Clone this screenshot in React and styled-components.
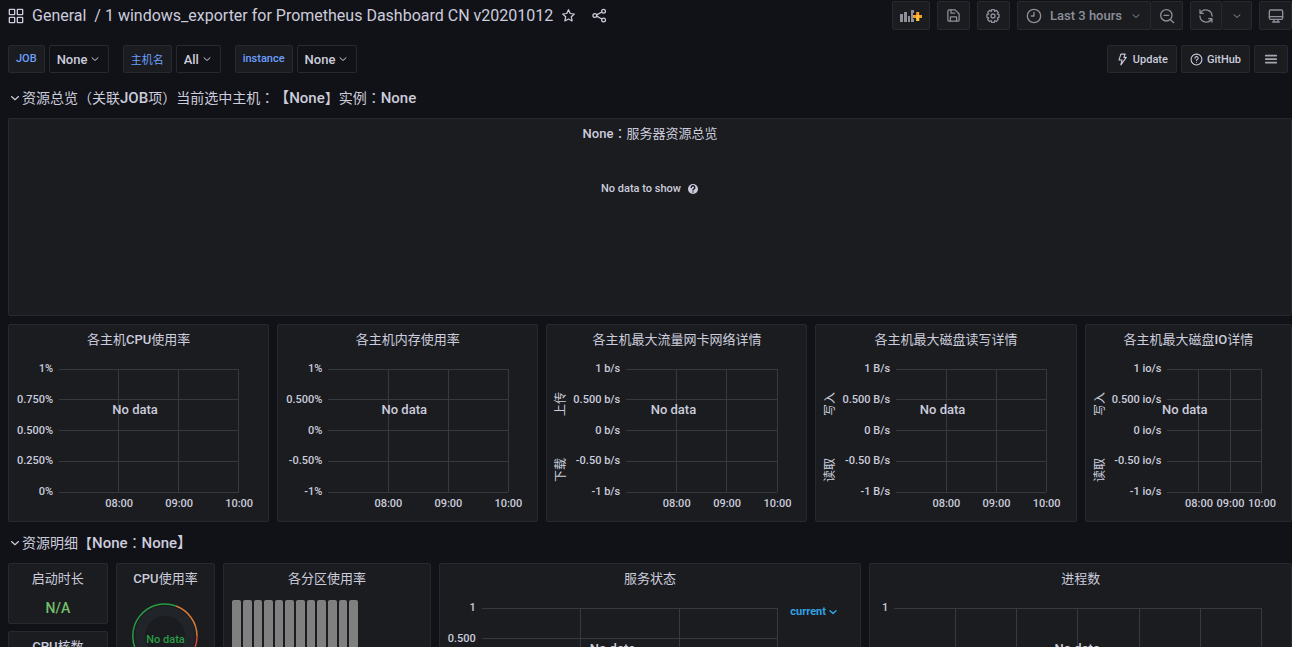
import React from "react";
import styled, { createGlobalStyle, css } from "styled-components";

const c = {
  canvas: "#111217",
  panel: "#1a1c20",
  border: "#27292e",
  text: "#ccccdc",
  muted: "#8e8f99",
  blue: "#6e9fff",
  cyan: "#33a2e5",
  green: "#73bf69",
  grid: "#37393d",
};

const GlobalStyle = createGlobalStyle`
  *, *::before, *::after { box-sizing: border-box; }
  body {
    margin: 0;
    background: ${c.canvas};
    color: ${c.text};
    font-family: Roboto, "Noto Sans CJK SC", sans-serif;
    font-size: 14px;
    text-spacing-trim: space-all;
  }
  button, select { font: inherit; color: inherit; }
  h1, h2, h3 { margin: 0; }
`;

const Page = styled.div`
  height: 100vh;
  overflow: hidden;
`;

const Header = styled.header`
  display: flex;
  align-items: center;
  justify-content: space-between;
  height: 31px;
  padding: 1px 0 1px 8px;
`;

const Breadcrumb = styled.div`
  display: flex;
  align-items: center;
  gap: 8px;
`;

const Title = styled.h1`
  font-size: 16px;
  line-height: 24px;
  font-weight: 400;
  white-space: pre;
`;

const Crumb = styled.a`
  color: inherit;
  text-decoration: none;
`;

const IconButton = styled.button`
  display: flex;
  padding: 0;
  border: 0;
  background: none;
  margin-right: 8px;
`;

const Toolbar = styled.div`
  display: flex;
  gap: 7px;
`;

const ButtonGroup = styled.div`
  display: flex;
`;

const ToolButton = styled.button`
  display: flex;
  align-items: center;
  justify-content: center;
  gap: 8px;
  height: 29px;
  min-width: ${(p) => p.$width || 33}px;
  padding: 0 6px;
  color: ${c.muted};
  background: ${c.panel};
  border: 1px solid ${c.border};
  border-radius: 2px;
  font-size: 13px;
  font-weight: 500;
  white-space: nowrap;
  ${(p) => p.$joined && css`border-left: 0;`}
`;

const TimeButton = styled(ToolButton)`
  justify-content: flex-start;
  min-width: 134px;
  padding: 0 8px;
  svg:last-child { margin-left: auto; }
`;

const Controls = styled.div`
  display: flex;
  justify-content: space-between;
  padding: 14px 4px 12px 8px;
`;

const Variables = styled.div`
  display: flex;
  gap: 14px;
`;

const Variable = styled.div`
  display: flex;
  gap: 4px;
`;

const VariableLabel = styled.label`
  height: 28px;
  padding: 0 7px;
  line-height: 26px;
  font-size: 11px;
  font-weight: 500;
  color: ${c.blue};
  background: ${c.panel};
  border: 1px solid ${c.border};
  border-radius: 2px;
`;

const SelectBox = styled.div`
  position: relative;
  svg {
    position: absolute;
    right: 8px;
    top: 8px;
    pointer-events: none;
  }
`;

const Select = styled.select`
  appearance: none;
  height: 28px;
  padding: 0 20px 0 7px;
  font-size: 13px;
  font-weight: 500;
  background: ${c.canvas};
  border: 1px solid ${c.border};
  border-radius: 2px;
`;

const Links = styled.nav`
  display: flex;
  gap: 4px;
`;

const LinkButton = styled.a`
  display: flex;
  align-items: center;
  justify-content: center;
  gap: 4px;
  height: 28px;
  min-width: 34px;
  padding: 0 8px;
  color: ${(p) => (p.$muted ? "#a5a6b1" : c.text)};
  background: ${c.panel};
  border: 1px solid ${c.border};
  border-radius: 2px;
  font-size: 11px;
  font-weight: 500;
  text-decoration: none;
`;

const RowTitle = styled.button`
  display: flex;
  align-items: center;
  height: 25px;
  margin: 0 0 8px;
  padding: 0 0 0 8px;
  border: 0;
  background: none;
  font-size: 15px;
  line-height: 24px;
  font-weight: 500;
`;

const PanelGrid = styled.section`
  display: grid;
  grid-template-columns: repeat(24, minmax(0, 1fr));
  gap: 8px;
  padding: 0 0 0 8px;
  margin-bottom: 8px;
`;

const Column = styled.div`
  grid-column: span ${(p) => p.$span};
  display: flex;
  flex-direction: column;
  gap: 7px;
`;

const PanelBox = styled.article`
  grid-column: span ${(p) => p.$span || 24};
  display: flex;
  flex-direction: column;
  min-width: 0;
  min-height: ${(p) => p.$height || 198}px;
  background: ${c.panel};
  border: 1px solid ${c.border};
  border-radius: 2px;
`;

const PanelTitle = styled.h2`
  height: 28px;
  line-height: 28px;
  text-align: center;
  font-size: 13px;
  font-weight: 500;
  white-space: nowrap;
`;

const Han = styled.span`
  font-family: "Noto Sans CJK SC", sans-serif;
  font-weight: 400;
  ${RowTitle} & { font-size: 14px; }
`;

const Wide = styled(Han)`
  font-family: "Noto Sans CJK TC", sans-serif;
`;

const EmptyNote = styled.p`
  display: flex;
  align-items: center;
  justify-content: center;
  gap: 6px;
  margin: 33px 0 0;
  font-size: 11px;
  line-height: 18px;
  font-weight: 500;
`;

const GraphBody = styled.div`
  display: flex;
  flex: 1;
  padding: 0 15px 0 8px;
`;

const Graph = styled.div`
  position: relative;
  display: flex;
  flex: 1;
  min-width: 0;
  padding: 16px ${(p) => (p.$legend ? 0 : 14)}px 0 0;
`;

const SideLabels = styled.div`
  display: flex;
  gap: 42px;
  width: 18px;
  height: 90px;
  margin-top: 23px;
  font-size: 12px;
  line-height: 12px;
  writing-mode: vertical-rl;
  text-orientation: sideways;
  transform: rotate(180deg);
  justify-content: flex-start;
  align-items: flex-start;
`;

const YAxis = styled.div`
  display: flex;
  flex-direction: column;
  justify-content: space-between;
  height: ${(p) => p.$height + 14}px;
  margin: -7px 6px 0 0;
  text-align: right;
  font-size: 11px;
  line-height: 14px;
  font-weight: 500;
  white-space: nowrap;
`;

const PlotColumn = styled.div`
  flex: 1;
  min-width: 0;
`;

const Plot = styled.svg`
  display: block;
  width: 100%;
  height: ${(p) => p.$height}px;
  overflow: visible;
  stroke: ${c.grid};
  shape-rendering: crispEdges;
`;

const XAxis = styled.div`
  display: grid;
  grid-template-columns: repeat(${(p) => p.$count}, minmax(0, 1fr));
  margin-top: 5px;
  font-size: 11px;
  line-height: 14px;
  font-weight: 500;
`;

const XTick = styled.span`
  justify-self: end;
  display: flex;
  justify-content: center;
  width: 0;
  white-space: nowrap;
`;

const NoData = styled.div`
  position: absolute;
  inset: 48px 0 auto;
  text-align: center;
  font-size: 13px;
  line-height: 18px;
  font-weight: 500;
`;

const Legend = styled.div`
  width: 68px;
  padding: 12px 0 0 13px;
`;

const LegendSort = styled.button`
  display: flex;
  align-items: center;
  gap: 1px;
  padding: 0;
  border: 0;
  background: none;
  color: ${c.cyan};
  font-size: 11px;
  line-height: 16px;
  font-weight: 700;
`;

const StatValue = styled.div`
  padding-top: 6px;
  text-align: center;
  font-size: 14px;
  line-height: 20px;
  font-weight: 500;
  color: ${c.green};
`;

const GaugeBody = styled.div`
  display: grid;
  justify-items: center;
  padding-top: 11px;
  > * { grid-area: 1 / 1; }
`;

const GaugeText = styled.span`
  align-self: center;
  padding-top: 6px;
  font-size: 11px;
  font-weight: 500;
  color: #299c46;
`;

const Bars = styled.div`
  display: grid;
  grid-template-columns: repeat(18, minmax(0, 1fr));
  gap: 2px;
  flex: 1;
  padding: 8px;
`;

const Bar = styled.div`
  background: #808080;
  border-radius: 2px 2px 0 0;
`;

function Icon({ size = 16, width = 2, children }) {
  return (
    <svg width={size} height={size} viewBox="0 0 24 24" fill="none" stroke="currentColor"
      strokeWidth={width} strokeLinecap="round" strokeLinejoin="round" aria-hidden="true">
      {children}
    </svg>
  );
}

const Chevron = ({ size = 12, width = 2 }) => (
  <Icon size={size} width={width}><path d="M6 9.5l6 5.500 6-5.500" /></Icon>
);
const Apps = () => (
  <Icon>
    <rect x="2" y="2" width="8" height="8" rx="0.5" /><rect x="14" y="2" width="8" height="8" rx="0.5" />
    <rect x="2" y="14" width="8" height="8" rx="0.5" /><rect x="14" y="14" width="8" height="8" rx="0.5" />
  </Icon>
);
const Star = () => (
  <Icon size={15}><path d="M12 2.8l2.8 6 6.5.8-4.8 4.5 1.3 6.6L12 17.5l-5.8 3.2 1.3-6.6-4.8-4.5 6.5-.8z" /></Icon>
);
const Share = () => (
  <Icon size={15}>
    <circle cx="4.500" cy="12" r="3" /><circle cx="18.500" cy="5" r="3" /><circle cx="18.500" cy="19" r="3" />
    <path d="M7.500 11l8.300-4.500M7.500 13l8.300 4.500" />
  </Icon>
);
const AddPanel = () => (
  <svg width="22" height="16" viewBox="0 0 22 16" aria-hidden="true">
    <g fill={c.muted}>
      <path d="M0 6h3v8H0zM4 4h3v10H4zM8 8h2v6H8zM11 2h3v3h-1v6h1v3h-3z" />
    </g>
    <path d="M16.200 4h3v3H22v3h-2.800v3h-3v-3H13V7h3.200z" fill="#f79b2c" />
    <path d="M16.200 7h3v6h-3z" fill="#fbc43b" />
  </svg>
);
const Save = () => (
  <Icon size={15}>
    <path d="M5 3h9.500L21 9.500V19a2 2 0 0 1-2 2H5a2 2 0 0 1-2-2V5a2 2 0 0 1 2-2z" />
    <path d="M8 3v5h6M7 21v-6a1 1 0 0 1 1-1h8a1 1 0 0 1 1 1v6" />
  </Icon>
);
const Cog = () => (
  <Icon>
    <path d="M9.500 5L10 2.500h4l.5 2.500 2.300-1.500 3 3L18.500 9l2.500.5v4.500l-2.500.8 1.300 2.500-3 3-2.300-1.300-.5 2.500h-4l-.5-2.500-2.500 1.300-3-3L5.500 15 3 14.200V9.700L5.500 9 4.200 6.500l3-3z" />
    <circle cx="12" cy="12" r="3" />
  </Icon>
);
const Clock = () => (
  <Icon><circle cx="12" cy="12" r="10" /><path d="M12 6.500V12H8" /></Icon>
);
const ZoomOut = () => (
  <Icon><circle cx="11" cy="11" r="8.500" /><path d="M7.500 11h7M17.500 17.500L22 22" /></Icon>
);
const Sync = () => (
  <Icon>
    <path d="M3 3v5h5M3.500 8a9.300 9.300 0 0 1 17.600 4M21 21v-5h-5M20.500 16A9.300 9.300 0 0 1 2.900 12" />
  </Icon>
);
const Monitor = () => (
  <Icon><rect x="2" y="3" width="20" height="14" rx="2" /><path d="M2 13h20M9 17v4M15 17v4M7 21h10" /></Icon>
);
const Bolt = () => (
  <Icon size={13}><path d="M9 2h8l-2.500 6H19L9 22l2-9H5.500z" /></Icon>
);
const Question = () => (
  <Icon size={13}>
    <circle cx="12" cy="12" r="10" />
    <path d="M9.200 9.500a2.900 2.900 0 1 1 4 2.700c-.8.300-1.200.8-1.200 1.500M12 17v.1" />
  </Icon>
);
const Menu = () => (
  <Icon size={14} width={3}><path d="M3 6h18M3 12h18M3 18h18" /></Icon>
);
const HelpSolid = () => (
  <svg width="12" height="12" viewBox="0 0 24 24" aria-hidden="true">
    <circle cx="12" cy="12" r="10" fill={c.text} />
    <path d="M8.500 9a3.500 3.500 0 1 1 4.800 3.300c-.9.400-1.300.9-1.300 1.900M12 17.800v.2" fill="none"
      stroke={c.panel} strokeWidth="3" strokeLinecap="round" />
  </svg>
);

/* Sets Chinese runs in the regular weight beside medium Latin, with centred full-width marks. */
function Mixed({ children }) {
  return children.split(/([（）：]|[\u3010\u3011\u4e00-\u9fff]+)/).filter(Boolean).map((run, i) => {
    if (/^[（）：]$/.test(run)) return <Wide key={i}>{run}</Wide>;
    if (/^[【】]$/.test(run)) return <React.Fragment key={i}>{run}</React.Fragment>;
    if (/[\u4e00-\u9fff]/.test(run)) return <Han key={i}>{run}</Han>;
    return <React.Fragment key={i}>{run}</React.Fragment>;
  });
}

function Panel({ title, children, ...rest }) {
  return (
    <PanelBox {...rest}>
      <PanelTitle><Mixed>{title}</Mixed></PanelTitle>
      {children}
    </PanelBox>
  );
}

function TimeGraph({ y, x = ["08:00", "09:00", "10:00"], sides, legend, height = 123 }) {
  return (
    <GraphBody>
      <Graph $legend={legend}>
        {sides && <SideLabels>{sides.map((s) => <span key={s}>{s}</span>)}</SideLabels>}
        <YAxis $height={height}>{y.map((v) => <span key={v}>{v}</span>)}</YAxis>
        <PlotColumn>
          <Plot $height={height}>
            {y.map((v, i) => {
              const at = `${(i * 100) / (y.length - 1)}%`;
              return <line key={v} x1="0" x2="100%" y1={at} y2={at} />;
            })}
            {x.map((v, i) => {
              const at = `${((i + 1) * 100) / x.length}%`;
              return <line key={v} x1={at} x2={at} y1="0" y2="100%" />;
            })}
          </Plot>
          <XAxis $count={x.length}>{x.map((v) => <XTick key={v}>{v}</XTick>)}</XAxis>
        </PlotColumn>
        <NoData>No data</NoData>
      </Graph>
      {legend && <Legend><LegendSort>{legend}<Chevron size={12} width={3} /></LegendSort></Legend>}
    </GraphBody>
  );
}

function Gauge() {
  return (
    <GaugeBody>
      <svg width="66" height="66" viewBox="-33 -33 66 66" fill="none" aria-hidden="true">
        <circle r="25" stroke="#212429" strokeWidth="10" />
        <path d="M-26 18.900A32 32 0 0 1 11 -30" stroke="#299c46" strokeWidth="1.500" />
        <path d="M11 -30A32 32 0 0 1 32 0" stroke="#d27a36" strokeWidth="1.500" />
        <path d="M32 0A32 32 0 0 1 26 18.900" stroke="#d44a3a" strokeWidth="1.500" />
      </svg>
      <GaugeText>No data</GaugeText>
    </GaugeBody>
  );
}

function VariablePicker({ id, label, value }) {
  return (
    <Variable>
      <VariableLabel htmlFor={id}><Mixed>{label}</Mixed></VariableLabel>
      <SelectBox>
        <Select id={id} defaultValue={value}><option>{value}</option></Select>
        <Chevron />
      </SelectBox>
    </Variable>
  );
}

const signed = (unit) => ["1", "0.500", "0", "-0.50", "-1"].map((v) => v + unit);

export default function App() {
  return (
    <Page>
      <GlobalStyle />
      <Header>
        <Breadcrumb>
          <Apps />
          <Title><Crumb href="#general">General</Crumb>{"  / "}<Crumb href="#dashboard">1 windows_exporter for Prometheus Dashboard CN v20201012</Crumb></Title>
          <IconButton aria-label="Star"><Star /></IconButton>
          <IconButton aria-label="Share"><Share /></IconButton>
        </Breadcrumb>
        <Toolbar>
          <ToolButton $width={38} aria-label="Add panel"><AddPanel /></ToolButton>
          <ToolButton aria-label="Save"><Save /></ToolButton>
          <ToolButton aria-label="Settings"><Cog /></ToolButton>
          <ButtonGroup>
            <TimeButton><Clock />Last 3 hours<Chevron /></TimeButton>
            <ToolButton $joined $width={32} aria-label="Zoom out"><ZoomOut /></ToolButton>
          </ButtonGroup>
          <ButtonGroup>
            <ToolButton $width={32} aria-label="Refresh"><Sync /></ToolButton>
            <ToolButton $joined $width={30} aria-label="Refresh interval"><Chevron /></ToolButton>
          </ButtonGroup>
          <ToolButton aria-label="View mode"><Monitor /></ToolButton>
        </Toolbar>
      </Header>

      <Controls>
        <Variables>
          <VariablePicker id="job" label="JOB" value="None" />
          <VariablePicker id="host" label="主机名" value="All" />
          <VariablePicker id="instance" label="instance" value="None" />
        </Variables>
        <Links>
          <LinkButton href="#update"><Bolt />Update</LinkButton>
          <LinkButton href="#github"><Question />GitHub</LinkButton>
          <LinkButton href="#menu" $muted aria-label="Menu"><Menu /></LinkButton>
        </Links>
      </Controls>

      <RowTitle>
        <Chevron size={14} />
        <span><Mixed>资源总览（关联JOB项）当前选中主机：【None】实例：None</Mixed></span>
      </RowTitle>
      <PanelGrid>
        <Panel title="None：服务器资源总览">
          <EmptyNote>No data to show <HelpSolid /></EmptyNote>
        </Panel>
      </PanelGrid>
      <PanelGrid>
        <Panel $span={5} title="各主机CPU使用率">
          <TimeGraph y={["1%", "0.750%", "0.500%", "0.250%", "0%"]} />
        </Panel>
        <Panel $span={5} title="各主机内存使用率">
          <TimeGraph y={signed("%")} />
        </Panel>
        <Panel $span={5} title="各主机最大流量网卡网络详情">
          <TimeGraph y={signed(" b/s")} sides={["下载", "上传"]} />
        </Panel>
        <Panel $span={5} title="各主机最大磁盘读写详情">
          <TimeGraph y={signed(" B/s")} sides={["读取", "写入"]} />
        </Panel>
        <Panel $span={4} title="各主机最大磁盘IO详情">
          <TimeGraph y={signed(" io/s")} sides={["读取", "写入"]} />
        </Panel>
      </PanelGrid>

      <RowTitle>
        <Chevron size={14} />
        <span><Mixed>资源明细【None：None】</Mixed></span>
      </RowTitle>
      <PanelGrid>
        <Column $span={2}>
          <Panel $height={61} title="启动时长"><StatValue>N/A</StatValue></Panel>
          <Panel $height={61} title="CPU核数"><StatValue>N/A</StatValue></Panel>
        </Column>
        <Panel $span={2} title="CPU使用率"><Gauge /></Panel>
        <Panel $span={4} title="各分区使用率">
          <Bars>{Array.from({ length: 12 }, (_, i) => <Bar key={i} />)}</Bars>
        </Panel>
        <Panel $span={8} title="服务状态">
          <TimeGraph y={["1", "0.500", "0", "-0.50", "-1"]} legend="current" />
        </Panel>
        <Panel $span={8} title="进程数">
          <TimeGraph y={["1", "-1"]} x={["07:30", "08:00", "08:30", "09:00", "09:30", "10:00"]} />
        </Panel>
      </PanelGrid>
    </Page>
  );
}
